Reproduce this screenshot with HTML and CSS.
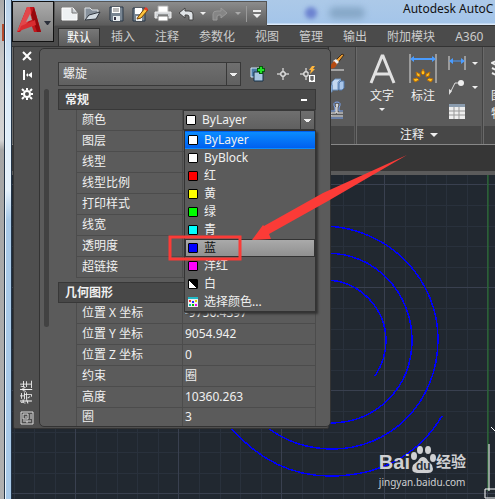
FILE: index.html
```html
<!DOCTYPE html>
<html lang="zh-CN">
<head>
    <meta charset="UTF-8">
    <title>Autodesk AutoCAD</title>
    <link rel="stylesheet" href="styles.css">
</head>
<body>
<div class="behind"><span class="behind-mark"></span></div>
<div class="frame"></div>
<div class="window">
    <header class="header">
        <button class="app-button" aria-label="应用程序菜单">
            <svg width="38" height="36" viewBox="0 0 38 36">
                <path d="M3 28L13 3H20L27 28H20L17 20L9 24L6 28Z" fill="#c4161c"/>
                <path d="M13 3H16L18 13L10 23L3 28Z" fill="#e2474b"/>
                <path d="M20 3L27 28H23L17 11Z" fill="#96070d"/>
                <path d="M16 10L18 16L12 18Z" fill="#a6a6a6"/>
                <path d="M7 22L21 16L22 21L5 27Z" fill="#d92c31"/>
                <path d="M30 17H37L34 21H33Z" fill="#2b2f3a"/>
            </svg>
        </button>
        <div class="titlebar">
            <div class="quick">
                <button aria-label="新建"><svg width="18" height="18" viewBox="0 0 18 18"><path d="M1 3H12L16 8V15H1Z" fill="#eef1f3" stroke="#fff"/><path d="M11 3V8H16" fill="#c6cbd0" stroke="#777"/></svg></button>
                <button aria-label="打开"><svg width="18" height="18" viewBox="0 0 18 18"><path d="M1 15V3H6L8 5H14V8" fill="#87919c" stroke="#dfe4e8"/><path d="M1 15L5 10L16 7L12 14Z" fill="#d4dce3" stroke="#30363e"/></svg></button>
                <button aria-label="保存"><svg width="18" height="18" viewBox="0 0 18 18"><path d="M3 2H16V16H4L3 15Z" fill="#788592" stroke="#283747"/><path d="M5 2H13V8H5Z" fill="#fff"/><path d="M6 4H12M6 6H12" stroke="#777"/><path d="M6 11H13V16H6Z" fill="#e8edf0"/><path d="M8 12V15" stroke="#334" stroke-width="2"/></svg></button>
                <button aria-label="另存为"><svg width="18" height="18" viewBox="0 0 18 18"><path d="M2 3H14V16H2Z" fill="#788592" stroke="#283747"/><path d="M4 3H11V9H4Z" fill="#fff"/><path d="M5 11H11V16H5Z" fill="#e8edf0"/><path d="M7 12L14 3L17 5L10 13L6 14Z" fill="#ffc43b" stroke="#744309"/><path d="M13 4L15 2L17 4L16 6Z" fill="#e6372a"/></svg></button>
                <button aria-label="打印"><svg width="18" height="18" viewBox="0 0 18 18"><path d="M4 1H14V8H4Z" fill="#fff" stroke="#aaa"/><path d="M1 7H17V13H1Z" fill="#d2d5d8" stroke="#eee"/><path d="M4 11H14V16H4Z" fill="#fff" stroke="#777"/><path d="M4 10H14" stroke="#555"/></svg></button>
                <button aria-label="放弃"><svg width="18" height="18" viewBox="0 0 18 18"><path d="M2 8L8 3V6H12Q16 6 16 9V15H12V12Q12 10 10 10H8V13Z" fill="#dfe3e6" stroke="#444"/></svg></button>
                <button class="drop" aria-label="放弃列表"></button>
                <button aria-label="重做"><svg width="18" height="18" viewBox="0 0 18 18"><path d="M16 8L10 3V6H6Q2 6 2 9V15H6V12Q6 10 8 10H10V13Z" fill="#858585" stroke="#999"/></svg></button>
                <button class="drop dim" aria-label="重做列表"></button>
                <span class="quick-line"></span>
                <button aria-label="自定义快速访问工具栏"><svg width="10" height="10" viewBox="0 0 10 10"><path d="M1 2H9" stroke="#eee" stroke-width="2"/><path d="M1 5H9L5 9Z" fill="#eee"/></svg></button>
            </div>
            <div class="title"><i class="glow"></i><i class="glow wide"></i><span>Autodesk AutoC</span></div>
        </div>
        <nav class="tabs">
            <a class="active" href="#">默认</a>
            <a href="#">插入</a>
            <a href="#">注释</a>
            <a href="#">参数化</a>
            <a href="#">视图</a>
            <a href="#">管理</a>
            <a href="#">输出</a>
            <a href="#">附加模块</a>
            <a href="#">A360</a>
        </nav>
    </header>

    <div class="ribbon">
        <section class="panel modify">
            <div class="panel-body">
                <svg width="18" height="78" viewBox="0 0 18 78">
                    <path d="M0 23H17" stroke="#eee"/>
                    <path d="M7 15L15 7L17 8L10 17Z" fill="#e99b31" stroke="#3b2a1a"/>
                    <path d="M6 14L9 12L12 15L9 18Z" fill="#f1f1f1"/>
                    <path d="M7 14L10 17Q8 23 2 21Q4 17 7 14Z" fill="#b64b11"/>
                    <path d="M5 35L8 32H14L11 35V43H5Z" fill="#c4d8f0" stroke="#6d93c1"/>
                    <path d="M11 35L14 32V39L11 43Z" fill="#7fa2cd"/>
                    <path d="M12 36L14 34H17V41L15 43H12Z" fill="#a8c5e9" stroke="#5279aa"/>
                    <path d="M0 38H5V45H0Z" fill="#a8c9f0" stroke="#6388b6"/>
                    <path d="M16 64H12V61Q15 55 10 55Q5 55 8 61V64H3Q1 65 1 68Q1 71 4 71H16" fill="none" stroke="#79a3f0"/>
                    <path d="M16 66H10V60Q12 57 10 57Q8 57 10 60M9 60V66H4Q3 67 4 69H16" fill="none" stroke="#eee"/>
                </svg>
            </div>
            <div class="panel-title"></div>
        </section>
        <section class="panel annotate">
            <div class="panel-body">
                <button class="big">
                    <svg width="30" height="40" viewBox="0 0 30 40"><path d="M4 36L15 9H16L27 36M8 27H23" fill="none" stroke="#e1e1e1" stroke-width="3"/></svg>
                    <span>文字</span>
                    <i class="caret"></i>
                </button>
                <button class="big">
                    <svg width="30" height="40" viewBox="0 0 30 40"><path d="M2 7V36M28 7V36" stroke="#ddd"/><path d="M4 12H26" stroke="#4a9cff" stroke-width="2"/><path d="M2 12L6 9V15ZM28 12L24 9V15Z" fill="#4a9cff"/><path d="M15 22L17 26L15 28L13 26ZM8 25L12 27V30L9 29ZM22 25L18 27V30L21 29ZM5 32L9 31L11 33L7 35ZM25 32L21 31L19 33L23 35Z" fill="#ffc31f" stroke="#b66b08" stroke-width="1"/></svg>
                    <span>标注</span>
                </button>
                <div class="small">
                    <button class="tool" aria-label="线性"><svg width="18" height="18" viewBox="0 0 18 18"><path d="M1 2V16M17 2V16" stroke="#ddd"/><path d="M3 7H15" stroke="#4a9cff"/><path d="M1 7L5 4V10ZM17 7L13 4V10Z" fill="#4a9cff"/></svg><i class="caret"></i></button>
                    <button class="tool" aria-label="引线"><svg width="18" height="18" viewBox="0 0 18 18"><path d="M2 15L7 5H11" fill="none" stroke="#ddd"/><path d="M1 17L1 11L4 13Z" fill="#ddd"/><circle cx="13" cy="5" r="3" fill="#eee"/></svg><i class="caret"></i></button>
                    <button class="tool" aria-label="表格"><svg width="18" height="18" viewBox="0 0 18 18"><path d="M1 2H17V17H1Z" fill="#eee"/><path d="M1 2H17V5H1Z" fill="#8b9cae"/><path d="M6 5V17M11 5V17M1 9H17M1 13H17" stroke="#999"/></svg></button>
                </div>
            </div>
            <button class="panel-title">注释<i class="caret large"></i></button>
        </section>
        <section class="panel layers">
            <div class="panel-body">
                <button class="big">
                    <svg width="30" height="40" viewBox="0 0 30 40"><path d="M1 16L11 11L21 16L11 21ZM1 21L11 26L21 21M1 26L11 31L21 26" fill="none" stroke="#eee" stroke-width="2"/></svg>
                    <span>图层</span>
                    <span>特性</span>
                </button>
            </div>
            <div class="panel-title"></div>
        </section>
    </div>
    <div class="file-tabs"></div>

    <main class="drawing">
        <svg class="canvas" viewBox="12 174 483 325" preserveAspectRatio="xMinYMin slice">
            <defs>
                <pattern id="grid" x="75" y="183" width="103" height="103" patternUnits="userSpaceOnUse">
                    <path d="M21 0V103M42 0V103M62 0V103M83 0V103M0 21H103M0 42H103M0 62H103M0 83H103" stroke="#29313c" transform="translate(.5 .5)"/>
                    <path d="M0 0H103M0 0V103" stroke="#39404f" stroke-width="2"/>
                </pattern>
            </defs>
            <rect x="12" y="174" width="483" height="325" fill="#212830"/>
            <rect x="12" y="174" width="483" height="325" fill="url(#grid)"/>
            <path d="M488 174V490" stroke="#257a2a"/>
            <g class="helix">
                <path d="M325 279C360 279 386 308 386 340Q386 358 375 375"/>
                <path d="M325 252C377 252 412 293 412 339C412 387 376 422 330 422"/>
                <path d="M325 225C391 227 438 280 438 338C438 403 389 448 333 448Q296 448 268 427"/>
                <path d="M231 427Q273 475 330 475C379 475 418 455 442 415"/>
            </g>
            <path class="cursor" d="M489 443V490M485 488H500V497H485ZM491 426L497 432"/>
        </svg>
    </main>

    <aside class="palette">
        <div class="palette-bar">
            <button aria-label="关闭"><svg width="12" height="12" viewBox="0 0 12 12"><path d="M2 2L10 10M10 2L2 10" stroke="#fff" stroke-width="2"/></svg></button>
            <button aria-label="自动隐藏"><svg width="12" height="12" viewBox="0 0 12 12"><path d="M3 1V11" stroke="#fff" stroke-width="2"/><path d="M5 6L7 4V8ZM11 3V9L7 6Z" fill="#fff"/></svg></button>
            <button aria-label="特性"><svg width="12" height="12" viewBox="0 0 12 12"><circle cx="6" cy="6" r="3" fill="none" stroke="#fff" stroke-width="2"/><path d="M6 0V2M6 10V12M0 6H2M10 6H12M1 1L3 3M9 9L11 11M11 1L9 3M3 9L1 11" stroke="#fff" stroke-width="2"/></svg></button>
            <span class="palette-name">特性</span>
            <svg width="14" height="14" viewBox="0 0 14 14"><path d="M1 1H13V13H1ZM3 3H8V8H3ZM5 6H7M11 3V8M3 10H11M7 10V12" fill="none" stroke="#ddd"/></svg>
        </div>
        <div class="palette-body">
            <div class="picker">
                <select class="object-type" aria-label="对象类型"><option>螺旋</option></select>
                <button aria-label="切换 PICKADD"><svg width="16" height="16" viewBox="0 0 16 16"><path d="M1 2H10V11H1Z" fill="#4c7ba5" stroke="#d3e7f8"/><path d="M4 6H13V15H4Z" fill="#a9c7e1" stroke="#16324a"/><path d="M11 0V8M7 4H15" stroke="#075b0b" stroke-width="4"/><path d="M11 1V7M8 4H14" stroke="#22e229" stroke-width="2"/></svg></button>
                <button aria-label="选择对象"><svg width="16" height="16" viewBox="0 0 16 16"><path d="M8 2V6M8 10V14M2 8H6M10 8H14M6 6H10V10H6Z" fill="none" stroke="#fff"/></svg></button>
                <button aria-label="快速选择"><svg width="16" height="16" viewBox="0 0 16 16"><path d="M6 2V6M6 10V14M0 8H4M4 6H8V10H4Z" fill="none" stroke="#fff"/><path d="M12 0H15L13 3H15L10 8L11 4H9Z" fill="#ffb63d"/><path d="M9 9H15V16H9Z" fill="#fff"/><path d="M10 11H14M10 13H14M12 10V15" stroke="#333"/></svg></button>
            </div>
            <div class="sections">
                <div class="scroll"></div>
                <div class="properties">
                    <button class="section-head">常规<b></b></button>
                    <table>
                        <tr><th><label for="color">颜色</label></th><td class="color-cell"><i class="swatch"></i><select id="color"><option>ByLayer</option></select></td></tr>
                        <tr><th>图层</th><td></td></tr>
                        <tr><th>线型</th><td></td></tr>
                        <tr><th>线型比例</th><td></td></tr>
                        <tr><th>打印样式</th><td></td></tr>
                        <tr><th>线宽</th><td></td></tr>
                        <tr><th>透明度</th><td></td></tr>
                        <tr><th>超链接</th><td></td></tr>
                    </table>
                    <button class="section-head">几何图形</button>
                    <table class="geometry">
                        <tr><th><label for="pos-x">位置 X 坐标</label></th><td><input id="pos-x" value="-9756.4397"></td></tr>
                        <tr><th><label for="pos-y">位置 Y 坐标</label></th><td><input id="pos-y" value="9054.942"></td></tr>
                        <tr><th><label for="pos-z">位置 Z 坐标</label></th><td><input id="pos-z" value="0"></td></tr>
                        <tr><th><label for="limit">约束</label></th><td><input id="limit" value="圈"></td></tr>
                        <tr><th><label for="height">高度</label></th><td><input id="height" value="10360.263"></td></tr>
                        <tr><th><label for="turns">圈</label></th><td><input id="turns" value="3"></td></tr>
                    </table>
                    <ul class="color-menu" role="listbox" aria-label="颜色">
                        <li><button class="selected"><i class="swatch"></i>ByLayer</button></li>
                        <li><button><i class="swatch"></i>ByBlock</button></li>
                        <li><button><i class="swatch red"></i>红</button></li>
                        <li><button><i class="swatch yellow"></i>黄</button></li>
                        <li><button><i class="swatch green"></i>绿</button></li>
                        <li><button><i class="swatch cyan"></i>青</button></li>
                        <li><button class="hover"><i class="swatch blue"></i>蓝</button></li>
                        <li><button><i class="swatch magenta"></i>洋红</button></li>
                        <li><button><i class="swatch half"></i>白</button></li>
                        <li><button><svg width="10" height="10" viewBox="0 0 10 10"><path d="M0 0H10V10H0Z" fill="#eee"/><path d="M0 1H10" stroke="#20b9c8" stroke-width="2"/><path d="M1 3H3V5H1Z" fill="#e33"/><path d="M4 4H6V6H4Z" fill="#22f"/><path d="M7 3H9V5H7Z" fill="#dc0"/><path d="M1 7H3V9H1Z" fill="#0bb"/><path d="M4 7H6V9H4Z" fill="#0b0"/><path d="M7 7H9V9H7Z" fill="#e0e"/></svg>选择颜色...</button></li>
                    </ul>
                </div>
            </div>
        </div>
    </aside>
</div>

<svg class="callout" width="495" height="280" viewBox="0 0 495 280">
    <path d="M170 237H240V259H170Z" fill="none" stroke="#fb3b37" stroke-width="3"/>
    <path d="M407 155L323 193L264 226L263 225L252 240L271 239L269 234L328 201Z" fill="#fb3b37"/>
</svg>

<div class="watermark">
    <div class="brand">
        <span>Bai</span>
        <svg width="26" height="29" viewBox="0 0 26 29"><g fill="#cfd0d2"><ellipse cx="4" cy="11" rx="3" ry="4"/><ellipse cx="10" cy="5" rx="3" ry="4"/><ellipse cx="18" cy="5" rx="3" ry="4"/><ellipse cx="23" cy="13" rx="3" ry="4"/><path d="M13 12Q16 12 18 16L22 20Q25 28 18 28H7Q0 27 3 20L8 16Q10 12 13 12Z"/></g><text x="6" y="25">du</text></svg>
        <span class="cn">经验</span>
    </div>
    <div class="site">jingyan.baidu.com</div>
</div>
</body>
</html>
```

FILE: styles.css
```css
* {
    box-sizing: border-box;
}
body {
    margin: 0;
    height: 100vh;
    display: flex;
    position: relative;
    overflow: hidden;
    font: 12px/18px "Noto Sans", "Noto Sans CJK SC", sans-serif;
    color: #f0f0f0;
    background-color: #a9a9a9;
}
button, select, input {
    font: inherit;
    color: inherit;
    background: none;
    border: 0;
    padding: 0;
    margin: 0;
}
button {
    display: flex;
    align-items: center;
    justify-content: center;
}
svg {
    display: block;
    flex: none;
}
a {
    color: inherit;
    text-decoration: none;
}

/* window frame */
.behind {
    width: 4px;
    padding-top: 24px;
    background: linear-gradient(#aaa 0, #c8c8c8 60px, #d5d5d5 140px, #a5a5a5 150px, #b0b0b0);
}
.behind-mark {
    display: block;
    height: 17px;
    margin-left: 2px;
    background-color: #b54b2d;
}
.frame {
    width: 8px;
    border: solid #243548;
    border-width: 0 1px;
    background: linear-gradient(#b9d2ea, #dcecf9 90px, #e5f1fb 190px, #a8c9e8 220px);
    box-shadow: inset 1px 0 #eef6fc;
}
.window {
    flex: 1;
    min-width: 0;
    position: relative;
    display: flex;
    flex-direction: column;
    background-color: #3a3a3a;
}
.header {
    display: grid;
    grid-template-columns: 42px minmax(0, 1fr);
    grid-template-rows: 26px 20px;
    background: linear-gradient(#a9c9e9 0, #a9c9e9 25px, #4b4b4b 25px);
    border-bottom: 1px solid #333;
}
.app-button {
    grid-row: 1 / 3;
    height: 41px;
    margin-top: 1px;
    border: 1px solid #111;
    background: linear-gradient(#ababab, #777);
}
.titlebar {
    display: flex;
    min-width: 0;
}
.quick {
    width: 213px;
    margin-top: 1px;
    padding: 0 4px 0 6px;
    display: flex;
    align-items: center;
    justify-content: space-between;
    border: 1px solid #555;
    background: linear-gradient(#8c8c8c, #5c5c5c);
}
.drop::before, .caret {
    content: "";
    display: block;
    border: solid transparent;
    border-width: 3px 3px 0;
    border-top-color: #eee;
}
.drop.dim::before {
    border-top-color: #aaa;
}
.quick-line {
    width: 1px;
    height: 16px;
    background-color: #999;
}
.title {
    flex: 1;
    min-width: 0;
    display: flex;
    align-items: center;
    padding-left: 38px;
    overflow: hidden;
    white-space: nowrap;
    color: #111;
    line-height: 16px;
    background: linear-gradient(#acc9e8, #a4c5e9 23px, #dceafa 24px);
    border-bottom: 1px solid #333;
}
.title span {
    padding-bottom: 8px;
}
.glow {
    flex: none;
    width: 12px;
    height: 12px;
    margin-right: 12px;
    border-radius: 6px;
    background-color: #6c83d0;
    filter: blur(2px);
}
.glow.wide {
    width: 36px;
    margin-right: 38px;
    background-color: #87a8c8;
    filter: blur(3px);
}
.tabs {
    display: flex;
    padding: 2px 0 0 4px;
    gap: 2px;
    white-space: nowrap;
    color: #ccc;
}
.tabs a {
    padding: 0 9px;
}
.tabs .active {
    color: #fff;
    border: 1px solid #303030;
    border-bottom: 0;
    padding: 0 8px;
    background: linear-gradient(#777, #5c5c5c);
}

/* ribbon */
.ribbon {
    height: 98px;
    display: flex;
    overflow: hidden;
    background-color: #5b5b5b;
    border-bottom: 1px solid #888;
}
.panel {
    flex: none;
    display: flex;
    flex-direction: column;
    border-right: 1px solid #444;
    box-shadow: inset 1px 0 #6a6a6a;
}
.panel-body {
    flex: 1;
    display: flex;
    align-items: flex-start;
}
.panel-title {
    height: 18px;
    margin: 0 1px;
    gap: 6px;
    background-color: #474747;
}
.modify {
    width: 344px;
}
.modify .panel-body {
    justify-content: flex-end;
    padding-right: 10px;
}
.annotate {
    width: 127px;
}
.annotate .panel-body {
    padding-left: 9px;
    gap: 7px;
}
.big {
    flex-direction: column;
    width: 34px;
    white-space: nowrap;
}
.big .caret {
    margin-top: 3px;
}
.small {
    display: grid;
    gap: 6px;
    padding: 7px 0 0 1px;
}
.tool {
    justify-content: flex-start;
    gap: 6px;
}
.caret.large {
    border-width: 4px 4px 0;
}
.layers {
    width: 60px;
}
.layers .panel-body {
    padding-left: 8px;
}
.layers .big {
    align-items: flex-start;
}
.file-tabs {
    height: 30px;
    background-color: #363636;
    border-bottom: 4px solid #5b5b5b;
}
.drawing {
    flex: 1;
    min-height: 0;
}
.canvas {
    width: 100%;
    height: 100%;
}
.helix {
    fill: none;
    stroke: #00f;
    stroke-width: 1.5px;
    shape-rendering: crispEdges;
}
.cursor {
    fill: none;
    stroke: #fff;
}

/* properties palette, floats over the drawing */
.palette {
    position: absolute;
    left: 1px;
    top: 46px;
    width: 316px;
    display: flex;
    padding: 1px 0;
    background-color: #4f4f4f;
    border: 1px solid #333;
    border-radius: 2px;
}
.palette-bar {
    flex: none;
    width: 25px;
    padding: 2px 0;
    display: flex;
    flex-direction: column;
    align-items: center;
    gap: 7px;
}
.palette-name {
    writing-mode: vertical-rl;
    text-orientation: sideways;
    transform: rotate(180deg);
    margin-top: auto;
}
.palette-body {
    flex: 1;
    padding: 13px 14px 0 4px;
    background-color: #5b5b5b;
    border: 1px solid #333;
    border-radius: 5px;
}
.picker {
    display: flex;
    align-items: center;
    gap: 9px;
    padding-left: 14px;
    margin-bottom: 3px;
}
.object-type, .color-cell select {
    appearance: none;
    height: 24px;
    padding-left: 4px;
    border: 1px solid #383838;
    background:
        linear-gradient(#eee, #eee) right 3px top 10px / 7px 1px no-repeat,
        linear-gradient(#eee, #eee) right 4px top 11px / 5px 1px no-repeat,
        linear-gradient(#eee, #eee) right 5px top 12px / 3px 1px no-repeat,
        linear-gradient(#383838, #383838) right 13px top / 1px 100% no-repeat,
        linear-gradient(#6f6f6f, #606060);
}
.object-type {
    width: 183px;
}
.sections {
    display: flex;
    gap: 9px;
}
.scroll {
    width: 5px;
    height: 238px;
    border-radius: 3px;
    background-color: #424242;
}
.properties {
    flex: 1;
    position: relative;
}
.section-head {
    width: 100%;
    height: 21px;
    padding: 0 8px 0 6px;
    justify-content: space-between;
    font-weight: bold;
    background-color: #484848;
    border: 1px solid #383838;
}
.section-head b {
    width: 6px;
    height: 2px;
    background-color: #fff;
}
table {
    width: calc(100% - 18px);
    margin-left: 18px;
    table-layout: fixed;
    border-collapse: separate;
    border-spacing: 0;
    border-left: 1px solid #4c4c4c;
}
table + .section-head {
    margin-top: 4px;
}
th, td {
    height: 21px;
    padding: 0;
    font-weight: normal;
    text-align: left;
    border: solid #4c4c4c;
    border-width: 0 1px 1px 0;
}
th {
    width: 106px;
    padding-left: 5px;
}
td input {
    display: block;
    width: 100%;
    height: 18px;
    padding-left: 2px;
}
.geometry tr:last-child > * {
    height: 18px;
    border-bottom: 0;
}
.color-cell {
    position: relative;
}
.color-cell select {
    display: block;
    width: 100%;
    height: 20px;
    padding-left: 18px;
    background-position: right 3px top 8px, right 4px top 9px, right 5px top 10px, right 13px top, 0 0;
}
.color-cell .swatch {
    position: absolute;
    left: 3px;
    top: 5px;
}
.swatch {
    flex: none;
    width: 10px;
    height: 10px;
    border: 1px solid #000;
    border-radius: 1px;
    background-color: #fff;
}
.color-menu {
    position: absolute;
    top: 41px;
    right: 0;
    width: 132px;
    margin: 0;
    padding: 0;
    list-style: none;
    background-color: #5b5b5b;
    border: 1px solid #333;
    box-shadow: 2px 2px 2px #333;
}
.color-menu button {
    width: 100%;
    height: 18px;
    padding-left: 2px;
    gap: 6px;
    justify-content: flex-start;
    border: 1px solid transparent;
}
.color-menu .selected {
    background: linear-gradient(#0a8cff, #0060f0);
}
.color-menu .hover {
    color: #111;
    background: linear-gradient(#aaa, #909090);
    border-color: #333;
}
.swatch.red { background-color: #f00; }
.swatch.yellow { background-color: #ff0; }
.swatch.green { background-color: #0f0; }
.swatch.cyan { background-color: #0ff; }
.swatch.blue { background-color: #00f; }
.swatch.magenta { background-color: #f0f; }
.swatch.half { background: linear-gradient(45deg, #fff 50%, #000 50%); }

/* overlays */
.callout {
    position: absolute;
    left: 0;
    top: 0;
    pointer-events: none;
}
.watermark {
    position: absolute;
    right: 29px;
    bottom: 9px;
    color: #cfd0d2;
}
.brand {
    display: flex;
    align-items: flex-end;
    height: 29px;
    font: bold 20px/24px "Liberation Sans", "Noto Sans CJK SC", sans-serif;
}
.brand text {
    font-size: 12px;
    fill: #29303a;
}
.brand .cn {
    font-size: 15px;
}
.site {
    font-size: 10px;
    line-height: 16px;
}
```
